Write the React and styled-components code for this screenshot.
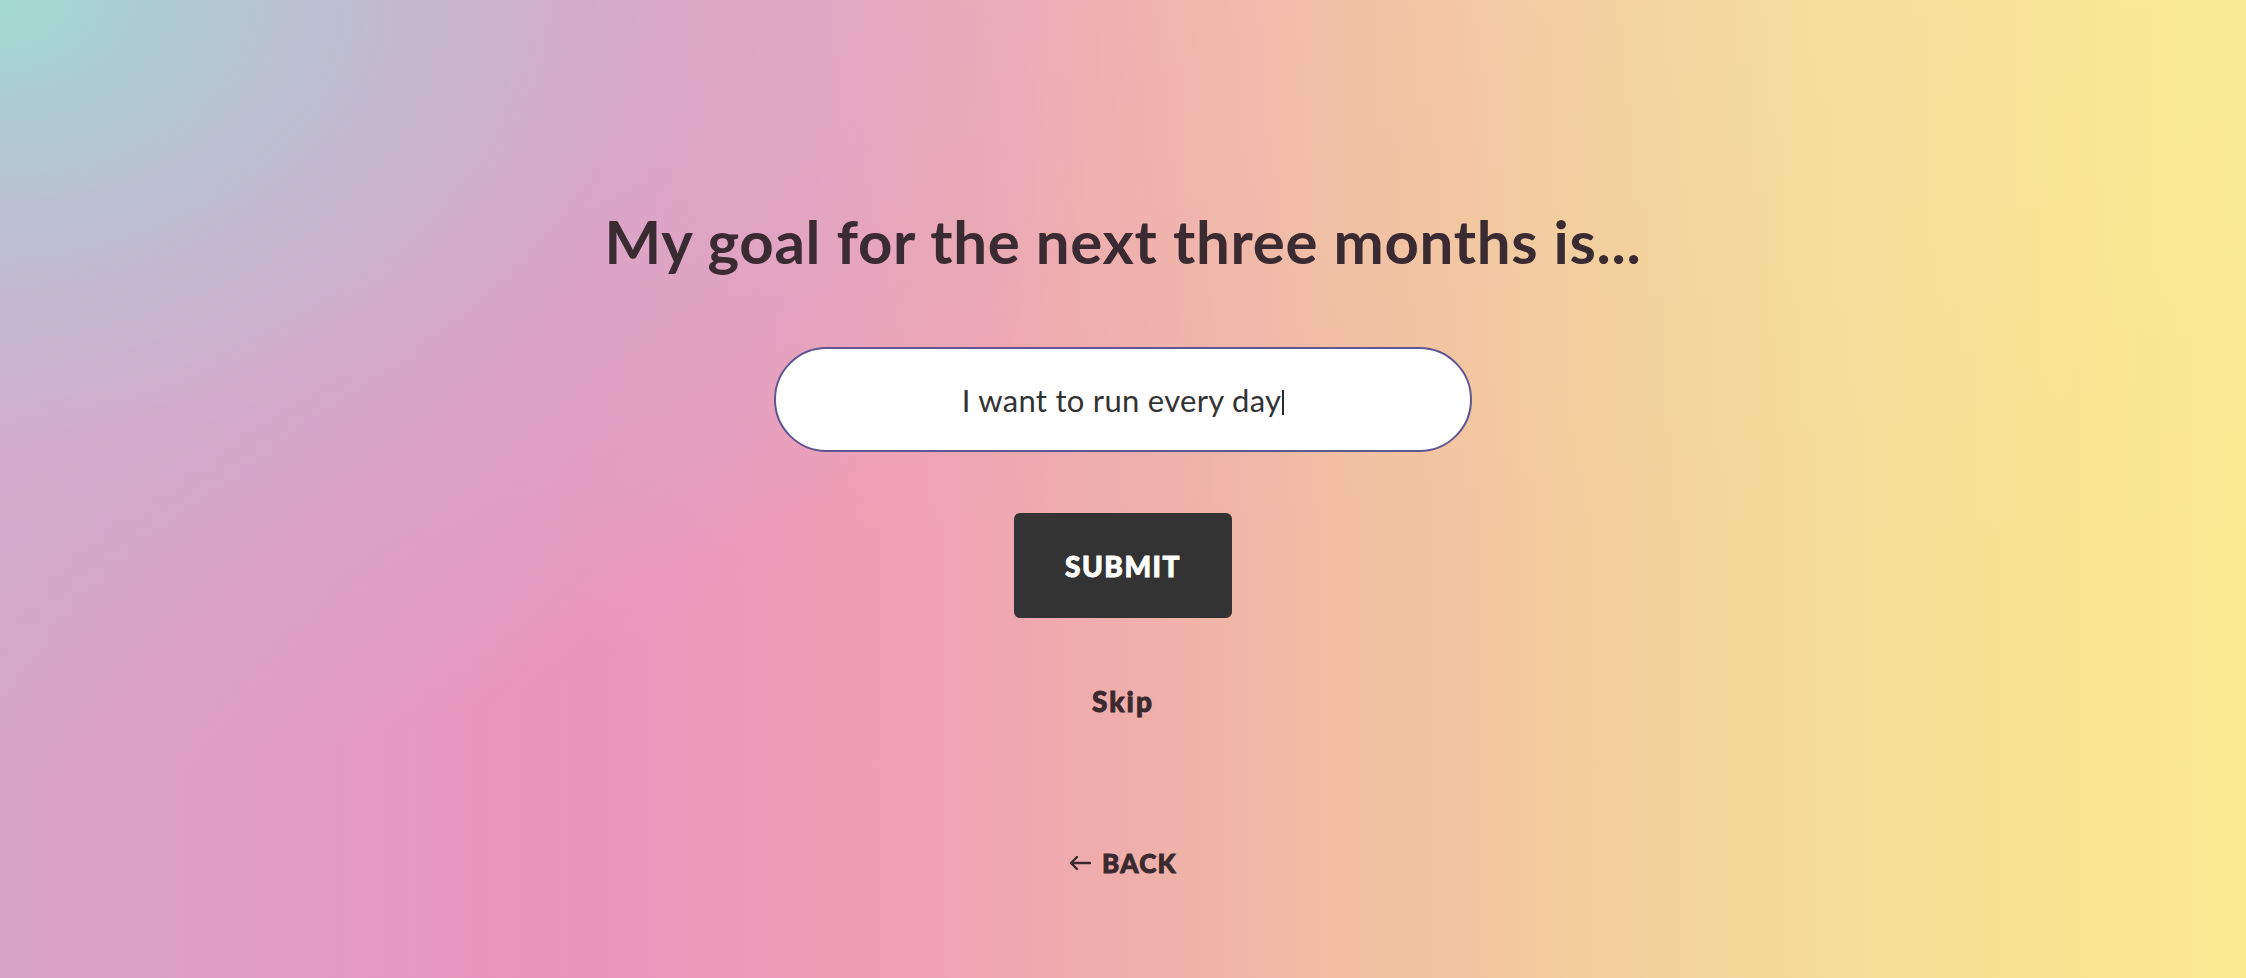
import React from "react";
import styled, { createGlobalStyle } from "styled-components";

const GlobalStyle = createGlobalStyle`
  html, body { margin: 0; padding: 0; }
  body { font-family: "Lato", "Liberation Sans", sans-serif; }
  * { box-sizing: border-box; }
`;

const Page = styled.div`
  min-height: 978px;
  width: 100%;
  display: flex;
  flex-direction: column;
  align-items: center;
  padding-top: 211px;
  background:
    radial-gradient(ellipse 1450px 1000px at 0% 0%, rgba(160, 218, 210, 1) 0%, rgba(184, 194, 210, 0.9) 22%, rgba(204, 176, 206, 0.6) 45%, rgba(216, 166, 200, 0) 78%),
    linear-gradient(180deg, rgba(255, 255, 255, 0.05) 0%, rgba(255, 255, 255, 0) 60%),
    linear-gradient(90deg, #d8a6c8 0%, #e39ac2 15%, #ea95bc 26%, #ee9eb6 38%, #efaeac 50%, #f1bea2 60%, #f3d09c 72%, #f6e096 85%, #f9ea8e 100%);
`;

const Title = styled.h1`
  margin: 0;
  font-family: "Lato", "Liberation Sans", sans-serif;
  font-weight: 700;
  font-size: 60px;
  line-height: 60px;
  color: #3a2a32;
  letter-spacing: 0.7px;
  white-space: nowrap;
`;

const InputBox = styled.div`
  margin-top: 76px;
  width: 698px;
  height: 105px;
  border: 2px solid #5e5592;
  border-radius: 53px;
  background: #ffffff;
  display: flex;
  align-items: center;
  justify-content: center;
  font-family: "Lato", "Liberation Sans", sans-serif;
  font-size: 31px;
  letter-spacing: 0.3px;
  color: #333333;
`;

const Caret = styled.span`
  display: inline-block;
  width: 2px;
  height: 25px;
  margin-left: 1px;
  background: #2a2a2a;
  transform: translateY(3px);
`;

const SubmitButton = styled.button`
  margin-top: 61px;
  width: 218px;
  height: 105px;
  border: none;
  border-radius: 6px;
  background: #333333;
  color: #ffffff;
  font-family: "Lato", "Liberation Sans", sans-serif;
  font-weight: 900;
  font-size: 28px;
  letter-spacing: 1.5px;
  -webkit-text-stroke: 0.9px #ffffff;
  cursor: pointer;
`;

const TextLink = styled.a`
  display: flex;
  align-items: center;
  gap: 11px;
  margin-top: ${(p) => p.$gap}px;
  font-family: "Lato", "Liberation Sans", sans-serif;
  font-weight: 900;
  font-size: ${(p) => p.$size}px;
  line-height: ${(p) => p.$size}px;
  letter-spacing: ${(p) => p.$spacing || 0}px;
  color: #3a2a2e;
  -webkit-text-stroke: 0.9px #3a2a2e;
  text-decoration: none;
  cursor: pointer;
`;

const ArrowIcon = () => (
  <svg width="22" height="14" viewBox="0 0 22 14" fill="none" style={{ display: "block" }}>
    <path d="M21 7H2M8 1L2 7l6 6" stroke="#3a2a2e" strokeWidth="2.4" strokeLinecap="round" strokeLinejoin="round" />
  </svg>
);

export default function App() {
  return (
    <>
      <GlobalStyle />
      <Page>
        <Title>My goal for the next three months is...</Title>
        <InputBox role="textbox">
          I want to run every day
          <Caret />
        </InputBox>
        <SubmitButton>SUBMIT</SubmitButton>
        <TextLink $gap={69} $size={28} $spacing={2}>Skip</TextLink>
        <TextLink $gap={135} $size={26} $spacing={1.3}>
          <ArrowIcon />
          BACK
        </TextLink>
      </Page>
    </>
  );
}
